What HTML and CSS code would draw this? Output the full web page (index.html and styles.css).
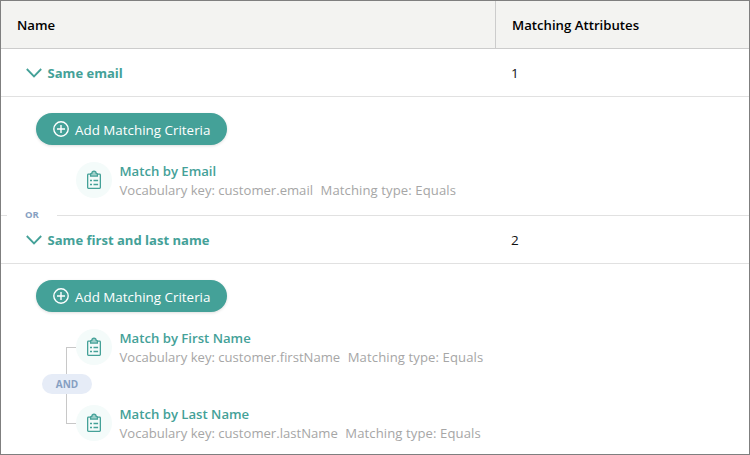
FILE: index.html
```
<!DOCTYPE html>
<html lang="en">
<head>
<meta charset="utf-8">
<title>Matching rules</title>
<link rel="stylesheet" href="styles.css">
</head>
<body>
<svg class="symbols" aria-hidden="true">
  <symbol id="chevron" viewBox="0 0 16 10"><path d="M.8 1l7.2 7.4L15.2 1" fill="none" stroke="currentColor" stroke-width="1.8"/></symbol>
  <symbol id="plus" viewBox="0 0 16 16"><g fill="none" stroke="currentColor" stroke-width="1.4"><circle cx="8" cy="8" r="7.2"/><path d="M8 4v8M4 8h8"/></g></symbol>
  <symbol id="clipboard" viewBox="0 0 16 20"><g fill="none" stroke="currentColor" stroke-width="1.3"><rect x="1.65" y="4.15" width="12.7" height="14.2" rx=".8"/><path d="M4.6 6.1V4.2q0-.8 1.2-.8Q6 1.2 8 1.2t2.2 2.2q1.2 0 1.2.8v1.9z" fill="#9fd0ca"/><path d="M4 10.5h2M7.5 10.5h4.6M4 14.5h2M7.5 14.5h4.6" stroke-width="1.6"/></g></symbol>
</svg>
<main class="table">
  <div class="row head">
    <div class="cell">Name</div>
    <div class="cell">Matching Attributes</div>
  </div>
  <div class="row group">
    <div class="cell title"><svg class="chevron"><use href="#chevron"/></svg><span>Same email</span></div>
    <div class="cell">1</div>
  </div>
  <section class="details first">
    <button class="add"><svg><use href="#plus"/></svg><span>Add Matching Criteria</span></button>
    <div class="rule">
      <div class="icon"><svg><use href="#clipboard"/></svg></div>
      <div class="text"><div class="label">Match by Email</div><div class="meta"><span>Vocabulary key: customer.email</span><span class="type">Matching type: Equals</span></div></div>
    </div>
    <span class="or">OR</span>
  </section>
  <div class="row group">
    <div class="cell title"><svg class="chevron"><use href="#chevron"/></svg><span>Same first and last name</span></div>
    <div class="cell">2</div>
  </div>
  <section class="details">
    <button class="add"><svg><use href="#plus"/></svg><span>Add Matching Criteria</span></button>
    <div class="joined">
      <div class="bracket"></div>
      <span class="and">AND</span>
      <div class="rule">
        <div class="icon"><svg><use href="#clipboard"/></svg></div>
        <div class="text"><div class="label">Match by First Name</div><div class="meta"><span>Vocabulary key: customer.firstName</span><span class="type">Matching type: Equals</span></div></div>
      </div>
      <div class="rule">
        <div class="icon"><svg><use href="#clipboard"/></svg></div>
        <div class="text"><div class="label">Match by Last Name</div><div class="meta"><span>Vocabulary key: customer.lastName</span><span class="type">Matching type: Equals</span></div></div>
      </div>
    </div>
  </section>
</main>
</body>
</html>
```
FILE: styles.css
```
* { box-sizing: border-box; }
body { margin: 0; background: #fff; color: #111; font: 13.5px/20px "Open Sans", "Noto Sans", sans-serif; }
svg { display: block; flex: none; }
.symbols { position: absolute; width: 0; height: 0; }
.table { width: 750px; height: 455px; border: 1px solid #7f7f7f; overflow: hidden; }
.row { display: grid; grid-template-columns: 494px 1fr; height: 48px; border-bottom: 1px solid #e1e1e1; }
.head { background: #f3f3f1; border-color: #ccc; font-weight: 600; font-size: 13.2px; color: #000; }
.cell { display: flex; align-items: center; padding: 1px 16px 0; }
.head .cell + .cell { border-left: 1px solid #ccc; }
.cell.title { padding-left: 25px; gap: 5.5px; color: #44a198; font-weight: 700; font-size: 13.05px; }
.chevron { width: 16px; height: 10px; }
.details { position: relative; padding: 16px 0 0 35px; }
.details.first { height: 119px; border-bottom: 1px solid #e1e1e1; }
.add { display: flex; align-items: center; gap: 6px; width: 191px; height: 32px; padding: 0 0 0 17px; border: 0; border-radius: 16px; background: #44a198; color: #fff; font: 13.4px/20px "Open Sans", sans-serif; white-space: nowrap; box-shadow: 0 1px 3px rgba(0,0,0,.13); }
.add svg { width: 16px; height: 16px; }
.add span { padding-top: 2px; }
.rule { display: flex; gap: 7.5px; height: 36px; margin: 17px 0 0 40px; }
.icon { display: grid; place-items: center; width: 36px; height: 36px; border-radius: 50%; background: #f4fbfa; color: #44a198; }
.icon svg { width: 16px; height: 20px; }
.text { white-space: nowrap; }
.label { height: 19px; line-height: 18px; font-size: 13.15px; font-weight: 600; color: #44a198; }
.meta { display: flex; gap: 7.5px; line-height: 19px; font-size: 13.1px; color: #a6a6a6; }
.type { letter-spacing: .1px; }
.or { position: absolute; left: 6px; bottom: -10px; width: 50px; height: 20px; background: #fff; color: #869fc2; font-size: 9.5px; font-weight: 700; line-height: 20px; padding-left: 18px; }
.joined { position: relative; }
.joined .rule + .rule { margin-top: 40px; }
.bracket { position: absolute; left: 30px; top: 18px; width: 10px; height: 77px; border: 1px solid #c8c8c8; border-right: 0; }
.and { position: absolute; left: 6px; top: 45px; width: 50px; height: 20px; border-radius: 10px; background: #e6ecf7; color: #869fc2; text-align: center; font-size: 10px; font-weight: 700; line-height: 21px; }
```
